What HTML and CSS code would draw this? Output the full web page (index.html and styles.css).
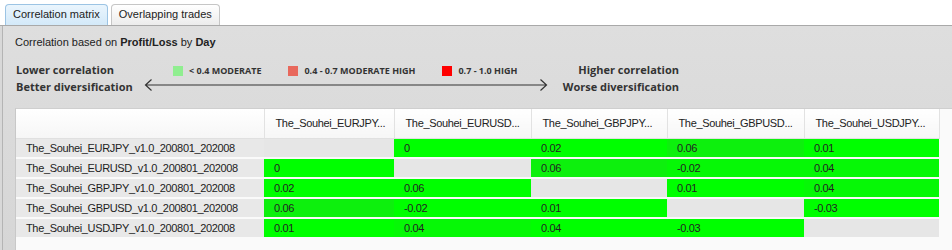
FILE: index.html
```html
<!DOCTYPE html>
<html>
<head>
<meta charset="utf-8">
<link rel="stylesheet" href="styles.css">
</head>
<body>
<div class="tabs">
  <div class="tab active">Correlation matrix</div>
  <div class="tab">Overlapping trades</div>
</div>
<div class="panel-wrap">
<div class="panel">
  <div class="title">Correlation based on <b>Profit/Loss</b> by <b>Day</b></div>
  <div class="legend">
    <div class="side left"><div>Lower correlation</div><div>Better diversification</div></div>
    <div class="mid">
      <div class="keys">
        <span class="key"><i class="sq g"></i>&lt; 0.4 MODERATE</span>
        <span class="key"><i class="sq o"></i>0.4 - 0.7 MODERATE HIGH</span>
        <span class="key"><i class="sq r"></i>0.7 - 1.0 HIGH</span>
      </div>
      <svg class="arrow" width="404" height="12" viewBox="0 0 404 12">
        <path d="M1.5 6 H402.5 M7.5 0.5 L1.5 6 L7.5 11.5 M396.5 0.5 L402.5 6 L396.5 11.5" fill="none" stroke="#333" stroke-width="1.2"/>
      </svg>
    </div>
    <div class="side right"><div>Higher correlation</div><div>Worse diversification</div></div>
  </div>
  <div class="grid-box">
    <table class="matrix">
      <colgroup><col class="c0"><col class="c1"><col class="c2"><col class="c3"><col class="c4"><col class="c5"></colgroup>
      <thead>
        <tr><th></th><th>The_Souhei_EURJPY...</th><th>The_Souhei_EURUSD...</th><th>The_Souhei_GBPJPY...</th><th>The_Souhei_GBPUSD...</th><th>The_Souhei_USDJPY...</th></tr>
      </thead>
      <tbody>
        <tr><td class="lbl">The_Souhei_EURJPY_v1.0_200801_202008</td><td class="d"></td><td class="g">0</td><td class="g">0.02</td><td class="g2">0.06</td><td class="g">0.01</td></tr>
        <tr><td class="lbl">The_Souhei_EURUSD_v1.0_200801_202008</td><td class="g">0</td><td class="d"></td><td class="g2">0.06</td><td class="g1">-0.02</td><td class="g1">0.04</td></tr>
        <tr><td class="lbl">The_Souhei_GBPJPY_v1.0_200801_202008</td><td class="g">0.02</td><td class="g">0.06</td><td class="d"></td><td class="g">0.01</td><td class="g1">0.04</td></tr>
        <tr><td class="lbl">The_Souhei_GBPUSD_v1.0_200801_202008</td><td class="g2">0.06</td><td class="g">-0.02</td><td class="g">0.01</td><td class="d"></td><td class="g">-0.03</td></tr>
        <tr><td class="lbl">The_Souhei_USDJPY_v1.0_200801_202008</td><td class="g">0.01</td><td class="g1">0.04</td><td class="g">0.04</td><td class="g">-0.03</td><td class="d"></td></tr>
      </tbody>
    </table>
  </div>
</div>
</div>
</body>
</html>
```
FILE: styles.css
```css
html, body { margin: 0; padding: 0; }
body {
  width: 952px; height: 250px; overflow: hidden;
  background: #fff;
  font-family: "Liberation Sans", Arial, sans-serif;
  font-size: 11px; color: #333;
}
.tabs {
  height: 25px; display: flex; align-items: flex-end; gap: 3px;
  padding-left: 5px; box-sizing: border-box;
}
.tab {
  height: 21px; box-sizing: border-box; padding: 0 7px;
  line-height: 19px; border: 1px solid #c6c6c6; border-bottom: none;
  border-radius: 4px 4px 0 0;
  background: linear-gradient(#ffffff, #ececec);
  color: #222; font-size: 11px;
}
.tab.active {
  border-color: #9cc4e4;
  background: linear-gradient(#eaf5fd, #d3e9f9);
}
.panel-wrap {
  background: #d8d8d8; padding-left: 2px;
  border-top: 1px solid #a9a9a9; height: 224px;
}
.panel {
  border-left: 1px solid #b4b4b4; height: 100%;
  background: linear-gradient(#dedede, #d6d6d6);
  padding-left: 12px; box-sizing: border-box;
}
.title { padding-top: 8px; height: 16px; line-height: 16px; color: #222; font-size: 11px; }
.title b { font-weight: bold; color: #222; }
.legend {
  display: flex; margin-top: 10px; height: 36px;
  font-family: "Open Sans", sans-serif; font-weight: 700; color: #333;
}
.side { font-size: 11px; line-height: 17px; padding-top: 1px; }
.side.left { width: 130px; padding-left: 1px; }
.side.right { width: 129px; text-align: right; }
.mid { width: 404px; }
.keys {
  display: flex; justify-content: flex-start; gap: 27px; padding-left: 27px;
  font-size: 9px; height: 14px; line-height: 14px; margin-top: 4px;
}
.key { display: flex; align-items: center; }
.sq { display: inline-block; width: 10px; height: 10px; margin-right: 6px; }
.sq.g { background: #90ee90; }
.sq.o { background: #e8685c; }
.sq.r { background: #ff0000; }
.arrow { display: block; margin-top: 1px; margin-left: -2px; }
.grid-box {
  margin-top: 12px; background: #fafafa;
  border-top: 1px solid #cfcfcf; border-left: 1px solid #c8c8c8;
  height: 150px;
}
.matrix { border-collapse: collapse; table-layout: fixed; width: 923px; }
.c0 { width: 248px; } .c1 { width: 130px; } .c2 { width: 137px; }
.c3 { width: 136px; } .c4 { width: 137px; } .c5 { width: 135px; }
.matrix th {
  height: 29px; background: linear-gradient(#ffffff, #f6f6f6);
  border-right: 1px solid #e2e2e2; border-bottom: 1px solid #e0e0e0;
  font-weight: normal; text-align: left; padding: 0 0 0 11px;
  white-space: nowrap; overflow: hidden; color: #222; box-sizing: border-box;
  font-size: 11px; letter-spacing: -0.35px;
}
.matrix td {
  height: 18px; padding: 0 0 0 10px; border-bottom: 2px solid #fafafa;
  white-space: nowrap; color: #222; box-sizing: content-box;
  font-size: 11px; letter-spacing: -0.35px;
}
.matrix td.lbl { background: #e8e8e8; }
.matrix td.d { background: #e6e6e6; }
.matrix td.g { background: #00ff00; }
.matrix td.g1 { background: #06f806; }
.matrix td.g2 { background: #0df00d; }
```
